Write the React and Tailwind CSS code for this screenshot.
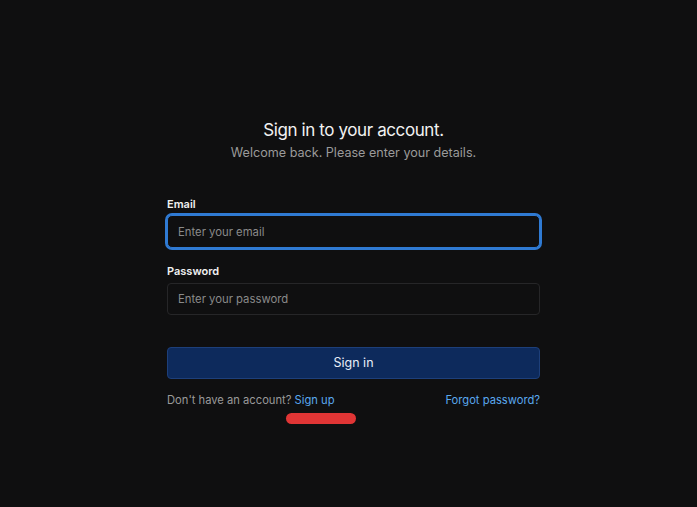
import { useState } from "react";

const App = () => {
  const [email, setEmail] = useState("");
  const [password, setPassword] = useState("");

  return (
    <div
      className="min-h-screen w-full bg-[#0f0f10] text-white flex justify-center pl-[10px]"
      style={{ fontFamily: "Inter, 'Noto Sans', sans-serif" }}
    >
      <div className="w-[373px] pt-[119px]">
        {/* heading */}
        <div className="text-center">
          <h1 className="text-[17px] leading-[22px] font-normal tracking-[-0.4px] text-[#f2f2f2]">
            Sign in to your account.
          </h1>
          <p className="mt-[4px] text-[12.6px] leading-[16px] text-[#9a9a9a]">
            Welcome back. Please enter your details.
          </p>
        </div>

        <form className="mt-[36px]" onSubmit={(e) => e.preventDefault()}>
          <label className="block text-[11px] leading-[14px] font-semibold text-[#f0f0f0]">
            Email
          </label>
          <input
            type="email"
            value={email}
            onChange={(e) => setEmail(e.target.value)}
            placeholder="Enter your email"
            className="mt-[4px] block w-full h-[33px] rounded-[5px] border border-[#2f7ad3] bg-[#0f0f10] px-[10px] text-[11.3px] text-white placeholder:text-[#8a8a8a] outline-none ring-[2px] ring-[#2f7ad3]"
          />

          <label className="mt-[16px] block text-[11px] leading-[14px] font-semibold text-[#f0f0f0]">
            Password
          </label>
          <input
            type="password"
            value={password}
            onChange={(e) => setPassword(e.target.value)}
            placeholder="Enter your password"
            className="mt-[5px] block w-full h-[32px] rounded-[4px] border border-[#262628] bg-[#0f0f10] px-[10px] text-[11.3px] text-white placeholder:text-[#8a8a8a] outline-none"
          />

          <button
            type="submit"
            className="mt-[32px] block w-full h-[32px] rounded-[4px] border border-[#1d3f7a] bg-[#0d2a5c] text-[12.5px] text-[#e8eef8]"
          >
            Sign in
          </button>
        </form>

        <div className="relative mt-[14px] flex items-center justify-between text-[11.2px] leading-[14px]">
          <p className="text-[#9a9a9a]">
            Don't have an account?{" "}
            <a href="#" className="text-[#5aa8ee]">
              Sign up
            </a>
          </p>
          <a href="#" className="text-[#5aa8ee]">
            Forgot password?
          </a>
          {/* red annotation mark */}
          <div className="absolute left-[119px] top-[20px] w-[70px] h-[11px] rounded-full bg-[#e03535]" />
        </div>
      </div>
    </div>
  );
};

export default App;
